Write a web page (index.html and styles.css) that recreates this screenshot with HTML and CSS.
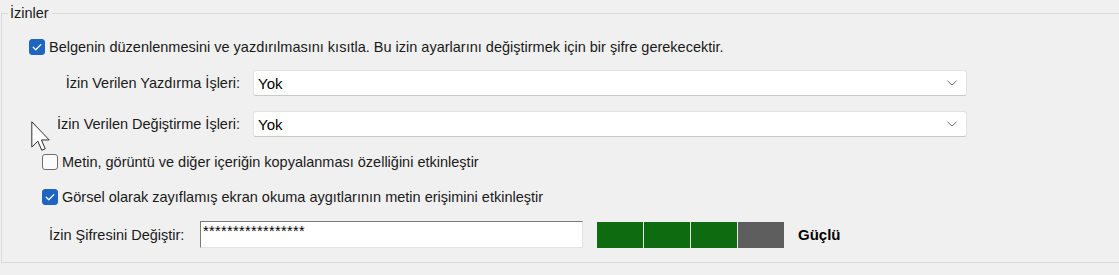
FILE: index.html
```html
<!DOCTYPE html>
<html lang="tr">
<head>
<meta charset="utf-8">
<title>İzinler</title>
<link rel="stylesheet" href="styles.css">
</head>
<body>
<fieldset class="group">
  <legend class="group-title">İzinler</legend>
  <div class="content">
    <label class="check-row row-restrict">
      <span class="box checked"><svg viewBox="0 0 16 16" width="16" height="16"><path d="M4.2 8.3 L6.8 10.8 L11.8 5.6" fill="none" stroke="#fff" stroke-width="1.3" stroke-linecap="round" stroke-linejoin="round"/></svg></span>
      <span class="check-text">Belgenin düzenlenmesini ve yazdırılmasını kısıtla. Bu izin ayarlarını değiştirmek için bir şifre gerekecektir.</span>
    </label>

    <div class="field-row row-print">
      <span class="field-label">İzin Verilen Yazdırma İşleri:</span>
      <div class="combo"><span class="combo-value">Yok</span><svg class="chev" viewBox="0 0 10 6" width="10" height="6"><path d="M0.5 0.8 L5 5 L9.5 0.8" fill="none" stroke="#6a6a6a" stroke-width="1"/></svg></div>
    </div>

    <div class="field-row row-change">
      <span class="field-label">İzin Verilen Değiştirme İşleri:</span>
      <div class="combo"><span class="combo-value">Yok</span><svg class="chev" viewBox="0 0 10 6" width="10" height="6"><path d="M0.5 0.8 L5 5 L9.5 0.8" fill="none" stroke="#6a6a6a" stroke-width="1"/></svg></div>
    </div>

    <label class="check-row row-copy">
      <span class="box"></span>
      <span class="check-text">Metin, görüntü ve diğer içeriğin kopyalanması özelliğini etkinleştir</span>
    </label>

    <label class="check-row row-access">
      <span class="box checked"><svg viewBox="0 0 16 16" width="16" height="16"><path d="M4.2 8.3 L6.8 10.8 L11.8 5.6" fill="none" stroke="#fff" stroke-width="1.3" stroke-linecap="round" stroke-linejoin="round"/></svg></span>
      <span class="check-text">Görsel olarak zayıflamış ekran okuma aygıtlarının metin erişimini etkinleştir</span>
    </label>

    <div class="pass-row">
      <span class="pass-label">İzin Şifresini Değiştir:</span>
      <div class="pass-input">*****************</div>
      <div class="meter">
        <span class="seg on"></span><span class="seg on"></span><span class="seg on"></span><span class="seg off"></span>
      </div>
      <span class="strength">Güçlü</span>
    </div>
  </div>
  <svg class="cursor" viewBox="0 0 12 19" width="19" height="30"><path d="M0.5 0.5 L0.5 16.5 L4.3 12.8 L6.8 18.5 L9 17.6 L6.6 12 L11.5 12 Z" fill="#fff" stroke="#222" stroke-width="0.6" stroke-linejoin="round"/></svg>
</fieldset>
</body>
</html>
```
FILE: styles.css
```css
html, body {
  margin: 0;
  padding: 0;
}
body {
  background: #f0f0f0;
  overflow: hidden;
  width: 1119px;
  height: 275px;
  font-family: "Liberation Sans", Arial, sans-serif;
  font-size: 14.5px;
  color: #1a1a1a;
}
.group {
  position: relative;
  margin: 6px 0 0 1px;
  padding: 0;
  width: 1140px;
  border: 1px solid #d9d9d9;
  box-sizing: border-box;
  min-width: 0;
}
.group-title {
  margin-left: 6px;
  padding: 0 3px 0 2px;
  line-height: 15px;
  height: 15px;
}
.content {
  display: flex;
  flex-direction: column;
  padding: 17px 0 14px 0;
}
.check-row {
  display: flex;
  align-items: center;
  height: 17px;
  gap: 4px;
}
.row-restrict { padding-left: 27px; }
.row-copy { padding-left: 40px; margin-top: 16px; }
.row-access { padding-left: 40px; margin-top: 18px; }
.box {
  width: 16px;
  height: 16px;
  box-sizing: border-box;
  border-radius: 3px;
  border: 1px solid #6c6c6c;
  background: #fbfbfb;
  flex: none;
  display: flex;
}
.box.checked {
  background: #1d65c1;
  border-color: #1d65c1;
}
.box.checked svg { margin: -1px; }
.check-text { white-space: nowrap; }
.field-row {
  display: grid;
  grid-template-columns: 238px 714px;
  column-gap: 13px;
  align-items: center;
  height: 26px;
  margin-top: 15px;
}
.field-label {
  text-align: right;
  white-space: nowrap;
}
.combo {
  height: 26px;
  box-sizing: border-box;
  background: #fff;
  border: 1px solid #e2e2e2;
  border-bottom-color: #c9c9c9;
  border-radius: 3px;
  display: flex;
  align-items: center;
  justify-content: space-between;
  padding: 0 9px 0 4px;
}
.combo-value { font-size: 15px; color: #000; }
.pass-row {
  display: flex;
  align-items: center;
  height: 27px;
  margin-top: 16px;
  padding-left: 47px;
}
.pass-label {
  width: 151px;
  white-space: nowrap;
}
.pass-input {
  width: 383px;
  height: 27px;
  box-sizing: border-box;
  background: #fff;
  border: 1px solid #e3e3e3;
  border-top-color: #7a7a7a;
  border-left-color: #7a7a7a;
  padding: 2px 0 0 2px;
  font-size: 14.5px;
  line-height: 15px;
  letter-spacing: 0.35px;
  color: #000;
}
.meter {
  display: flex;
  gap: 1px;
  margin-left: 14px;
  height: 26px;
  background: #e8e8e8;
}
.seg {
  width: 46px;
  height: 26px;
}
.seg.on { background: #0f6b0f; }
.seg.off { background: #5e5e5e; }
.strength {
  margin-left: 14px;
  font-weight: bold;
  font-size: 15px;
  color: #000;
}
.cursor {
  position: absolute;
  left: 29px;
  top: 100px;
}
```
